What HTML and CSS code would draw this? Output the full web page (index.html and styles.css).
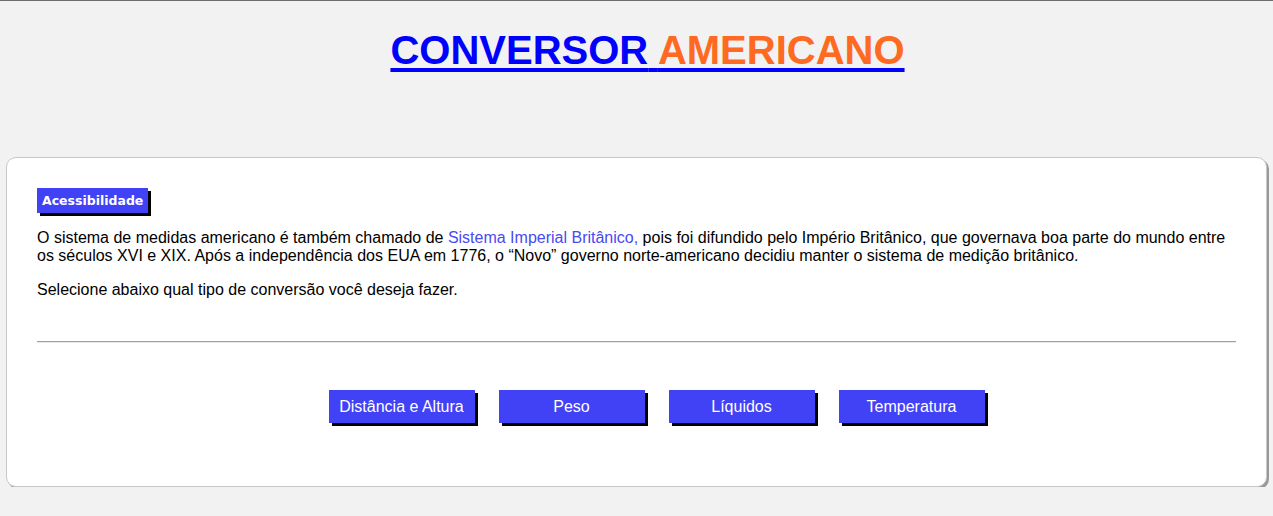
FILE: index.html
```html
<!DOCTYPE html>
<html lang="pt-BR">
<head>
<meta charset="utf-8">
<title>Conversor Americano</title>
<link rel="stylesheet" href="styles.css">
</head>
<body>
<header class="header">
  <h1 class="title"><a href="#" class="title-link"><span class="blue">CONVERSOR</span> <span class="orange">AMERICANO</span></a></h1>
</header>
<main class="card">
  <button class="badge">Acessibilidade</button>
  <p class="text">O sistema de medidas americano é também chamado de <a href="#" class="link">Sistema Imperial Britânico,</a> pois foi difundido pelo Império Britânico, que governava boa parte do mundo entre os séculos XVI e XIX. Após a independência dos EUA em 1776, o “Novo” governo norte-americano decidiu manter o sistema de medição britânico.</p>
  <p class="text">Selecione abaixo qual tipo de conversão você deseja fazer.</p>
  <hr class="divider">
  <nav class="buttons">
    <button class="btn">Distância e Altura</button>
    <button class="btn">Peso</button>
    <button class="btn">Líquidos</button>
    <button class="btn">Temperatura</button>
  </nav>
</main>
</body>
</html>
```
FILE: styles.css
```css
html, body {
  margin: 0;
  padding: 0;
}
body {
  background: #f2f2f2;
  border-top: 1px solid #6e6e6e;
  font-family: "Liberation Sans", Arial, sans-serif;
  color: #000;
}
.header {
  padding: 26px 0 0 22px;
  height: 156px;
  box-sizing: border-box;
  text-align: center;
}
.title {
  margin: 0;
  font-size: 40px;
  line-height: 46px;
  font-weight: bold;
}
.title-link {
  color: #0000ff;
  text-decoration: underline;
  text-decoration-thickness: 4px;
  text-underline-offset: 4px;
}
.blue { color: #0000ff; }
.orange { color: #ff6a22; }
.card {
  margin: 0 6px;
  background: #fff;
  border: 1px solid #c8c8c8;
  border-radius: 10px;
  box-shadow: 2px 2px 0 #999;
  padding: 30px 30px 62px 30px;
  height: 330px;
  box-sizing: border-box;
}
.badge {
  display: block;
  background: #4141f6;
  color: #fff;
  border: none;
  font-family: "DejaVu Sans", Verdana, sans-serif;
  font-weight: bold;
  font-size: 12.5px;
  height: 25px;
  padding: 0 5px;
  box-shadow: 3px 3px 0 #000;
  margin: 0 0 16px 0;
}
.text {
  font-size: 16px;
  line-height: 18px;
  margin: 0 0 16px 0;
}
.link {
  color: #4a4af0;
  text-decoration: none;
}
.divider {
  border: none;
  border-top: 1px solid #a0a0a0;
  border-bottom: 1px solid #e8e8e8;
  margin: 42px 0 0 0;
  height: 0;
}
.buttons {
  display: flex;
  justify-content: center;
  gap: 24px;
  margin-top: 47px;
  padding-left: 40px;
}
.btn {
  width: 146px;
  height: 33px;
  background: #4141f6;
  color: #fff;
  border: none;
  font-family: "Liberation Sans", Arial, sans-serif;
  font-size: 16px;
  box-shadow: 3px 3px 0 #000;
  padding: 0;
}
```
